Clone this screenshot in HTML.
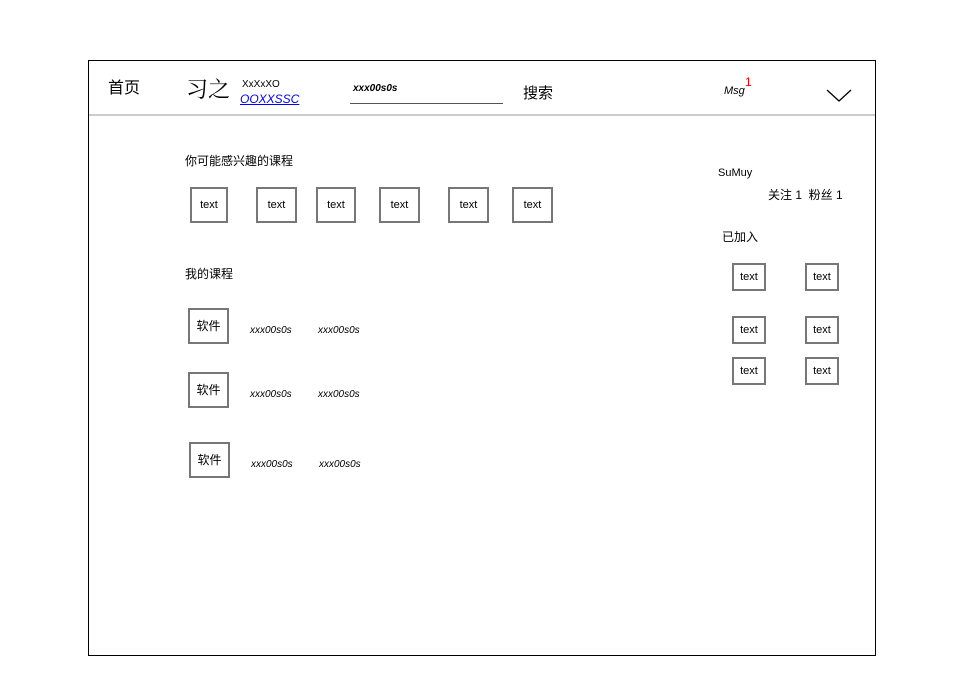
<!DOCTYPE html><html><head><meta charset="utf-8"><style>
body{margin:0;width:958px;height:698px;background:#fff;position:relative;overflow:hidden;font-family:"Liberation Sans","Noto Sans CJK SC",sans-serif;color:#000}
.a{position:absolute;white-space:nowrap}
.b{position:absolute;border:2px solid #777;box-sizing:border-box;font-size:11px;display:flex;align-items:center;justify-content:center}
.x{position:absolute;font-size:10px;font-style:italic;white-space:nowrap}
.c{font-size:12px}
</style></head><body>
<div class="a" style="left:88px;top:60px;width:786px;height:594px;border:1px solid #000"></div>
<div class="a" style="left:89px;top:114px;width:786px;height:2px;background:#ccc"></div>
<div class="a" style="left:108px;top:74px;font-size:16px">首页</div>
<div class="a" style="left:186px;top:73px;font-size:22px;font-family:'Noto Serif CJK SC',serif">习之</div>
<div class="a" style="left:242px;top:79px;font-size:10px">XxXxXO</div>
<div class="a" style="left:240px;top:92px;font-size:12px;color:#00f;text-decoration:underline;font-style:italic">OOXXSSC</div>
<div class="a" style="left:353px;top:83px;font-size:10px;font-style:italic;font-weight:bold">xxx00s0s</div>
<div class="a" style="left:350px;top:103px;width:153px;height:1px;background:#555"></div>
<div class="a" style="left:523px;top:82px;font-size:15px">搜索</div>
<div class="a" style="left:724px;top:85px;font-size:11px;font-style:italic">Msg</div>
<div class="a" style="left:745px;top:75px;font-size:12px;color:#e00">1</div>
<svg class="a" style="left:826px;top:89px" width="26" height="14"><path d="M1 1 L13 12 L25 1" fill="none" stroke="#000" stroke-width="1.3"/></svg>
<div class="a c" style="left:185px;top:152px">你可能感兴趣的课程</div>
<div class="b" style="left:190px;top:187px;width:38px;height:36px">text</div>
<div class="b" style="left:256px;top:187px;width:41px;height:36px">text</div>
<div class="b" style="left:316px;top:187px;width:40px;height:36px">text</div>
<div class="b" style="left:379px;top:187px;width:41px;height:36px">text</div>
<div class="b" style="left:448px;top:187px;width:41px;height:36px">text</div>
<div class="b" style="left:512px;top:187px;width:41px;height:36px">text</div>
<div class="a c" style="left:185px;top:265px">我的课程</div>
<div class="b" style="left:188px;top:308px;width:41px;height:36px;align-items:flex-start;padding-top:7px;font-size:12px">软件</div>
<div class="b" style="left:188px;top:372px;width:41px;height:36px;align-items:flex-start;padding-top:7px;font-size:12px">软件</div>
<div class="b" style="left:189px;top:442px;width:41px;height:36px;align-items:flex-start;padding-top:7px;font-size:12px">软件</div>
<div class="x" style="left:250px;top:325px">xxx00s0s</div><div class="x" style="left:318px;top:325px">xxx00s0s</div>
<div class="x" style="left:250px;top:389px">xxx00s0s</div><div class="x" style="left:318px;top:389px">xxx00s0s</div>
<div class="x" style="left:251px;top:459px">xxx00s0s</div><div class="x" style="left:319px;top:459px">xxx00s0s</div>
<div class="a" style="left:718px;top:167px;font-size:11px">SuMuy</div>
<div class="a c" style="left:768px;top:186px">关注 1 &nbsp;粉丝 1</div>
<div class="a c" style="left:722px;top:228px">已加入</div>
<div class="b" style="left:732px;top:263px;width:34px;height:28px">text</div>
<div class="b" style="left:805px;top:263px;width:34px;height:28px">text</div>
<div class="b" style="left:732px;top:316px;width:34px;height:28px">text</div>
<div class="b" style="left:805px;top:316px;width:34px;height:28px">text</div>
<div class="b" style="left:732px;top:357px;width:34px;height:28px">text</div>
<div class="b" style="left:805px;top:357px;width:34px;height:28px">text</div>
</body></html>
